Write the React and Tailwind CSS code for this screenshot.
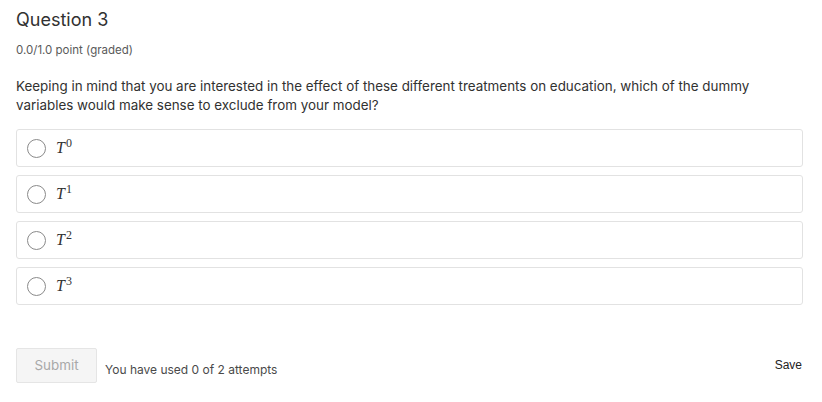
import React from "react";

const options = ["0", "1", "2", "3"];

function Option({ sup }) {
  return (
    <label className="flex h-[38px] items-center rounded-[3px] border border-[#e2e2e2] bg-white pl-[10px]">
      <span className="h-[19px] w-[19px] rounded-full border border-[#8a8a8a] bg-white" />
      <span className="ml-[10px] text-[16px] leading-none text-[#333]" style={{ fontFamily: '"Liberation Serif", "DejaVu Serif", serif' }}>
        <i>T</i>
        <sup className="ml-[1px] text-[12px] not-italic">{sup}</sup>
      </span>
    </label>
  );
}

export default function App() {
  return (
    <div className="h-[402px] w-[822px] bg-white px-4 pt-[9px] text-[#313131]" style={{ fontFamily: "Inter, sans-serif" }}>
      <h3 className="text-[18px] leading-[22px] text-[#313131]">Question 3</h3>
      <div className="mt-[12px] text-[11.5px] leading-[14px] text-[#5a5a5a]">0.0/1.0 point (graded)</div>
      <p className="mt-[20px] pr-[40px] text-[13.4px] leading-[19px] text-[#313131]">
        Keeping in mind that you are interested in the effect of these different treatments on education, which of the dummy variables would make sense to exclude from your model?
      </p>
      <div className="mt-[14px] flex w-[787px] flex-col gap-[8px]">
        {options.map((o) => (
          <Option key={o} sup={o} />
        ))}
      </div>
      <div className="mt-[43px] flex items-center">
        <button className="h-[35px] w-[81px] rounded-[2px] border border-[#e5e5e5] bg-[#f5f5f5] text-[13.4px] text-[#a8a8a8]">Submit</button>
        <span className="ml-[8px] mt-[9px] text-[12px] text-[#4a4a4a]">You have used 0 of 2 attempts</span>
        <span className="ml-auto mr-[4px] -mt-[2px] text-[12px] text-[#222]" style={{ fontFamily: '"Liberation Sans", Arial, sans-serif' }}>Save</span>
      </div>
    </div>
  );
}
